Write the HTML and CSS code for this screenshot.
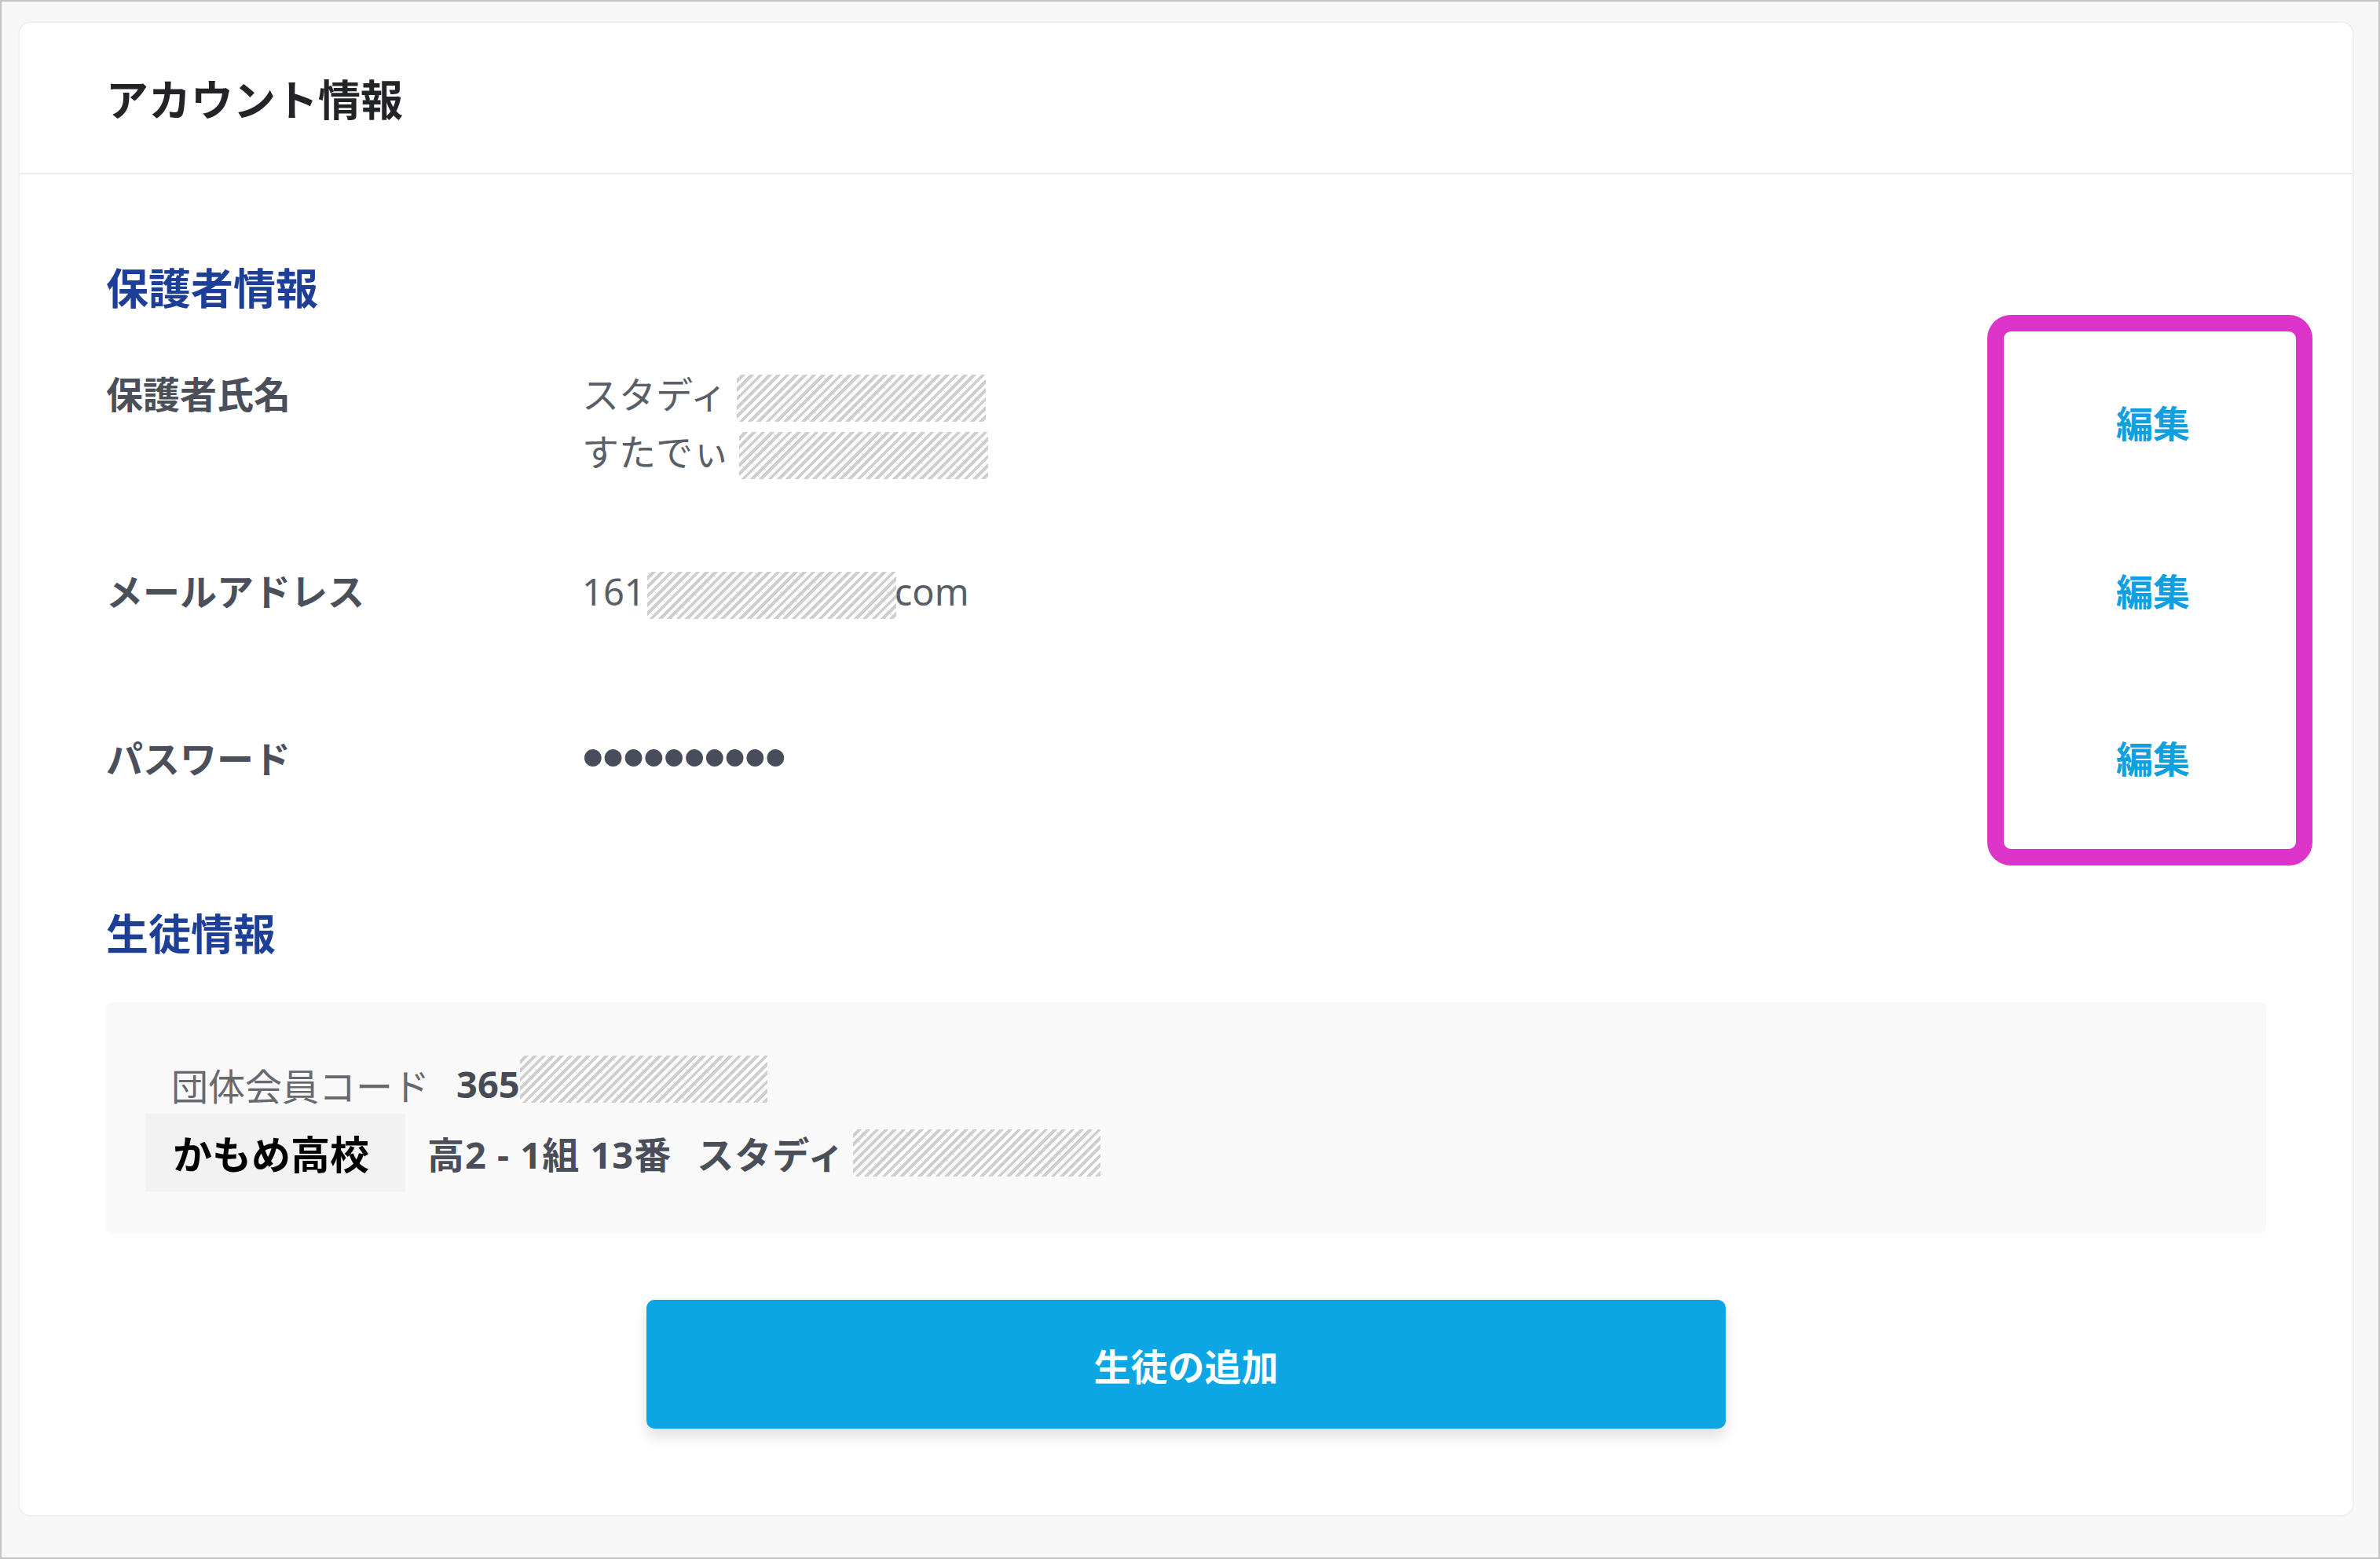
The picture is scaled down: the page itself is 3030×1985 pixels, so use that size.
FILE: index.html
```html
<!DOCTYPE html>
<html lang="ja">
<head>
<meta charset="utf-8">
<title>アカウント情報</title>
<link rel="stylesheet" href="styles.css">
</head>
<body>
<div class="frame">
  <div class="card">
    <div class="card-header">
      <h1 class="card-title">アカウント情報</h1>
    </div>
    <div class="card-body">
      <h2 class="section-title">保護者情報</h2>

      <div class="row row-name">
        <div class="row-label">保護者氏名</div>
        <div class="row-value">
          <div class="value-line">スタディ <span class="mask"></span></div>
          <div class="value-line">すたでぃ <span class="mask"></span></div>
        </div>
        <a class="row-action" href="#">編集</a>
      </div>

      <div class="row row-mail">
        <div class="row-label">メールアドレス</div>
        <div class="row-value">
          <div class="value-line">161<span class="mask mask-tight"></span>com</div>
        </div>
        <a class="row-action" href="#">編集</a>
      </div>

      <div class="row row-pass">
        <div class="row-label">パスワード</div>
        <div class="row-value">
          <div class="value-line password">••••••••••</div>
        </div>
        <a class="row-action" href="#">編集</a>
      </div>

      <h2 class="section-title section-student">生徒情報</h2>

      <div class="student-box">
        <div class="code-line"><span class="code-label">団体会員コード</span><strong class="code-num">365</strong><span class="mask mask-code"></span></div>
        <div class="student-line">
          <span class="school">かもめ高校</span>
          <span class="student-info">高2 - 1組 13番<span class="gap"></span>スタディ</span><span class="mask mask-student"></span>
        </div>
      </div>

      <div class="button-wrap">
        <button class="add-button" type="button">生徒の追加</button>
      </div>
    </div>

    <div class="annotation"></div>
  </div>
</div>
</body>
</html>
```

FILE: styles.css
```css
html, body {
  margin: 0;
  padding: 0;
}

body {
  font-family: "Noto Sans", "Noto Sans CJK JP", sans-serif;
  background: #f7f7f7;
}

.frame {
  box-sizing: border-box;
  height: 1985px;
  width: 3030px;
  border: 2px solid #c3c3c3;
  background: #f7f7f7;
  padding: 27px 33px 0 23px;
}

.card {
  position: relative;
  background: #ffffff;
  border-radius: 14px;
  box-shadow: 0 0 0 2px #efefef;
}

.card-header {
  box-sizing: border-box;
  height: 193px;
  border-bottom: 2px solid #e9eef1;
  padding: 4px 110px 0 110px;
  display: flex;
  align-items: center;
}

.card-title {
  margin: 0;
  font-size: 54px;
  line-height: 76px;
  font-weight: 700;
  color: #222428;
}

.card-body {
  padding: 0 110px 110px 110px;
}

.section-title {
  margin: 107px 0 0 0;
  font-size: 54px;
  line-height: 76px;
  font-weight: 700;
  color: #1d3f97;
}

.section-student {
  margin-top: 148px;
}

.row {
  display: grid;
  grid-template-columns: 606px 1fr 288px;
  align-items: start;
  font-size: 47px;
  line-height: 73px;
}

.row-name { margin-top: 61px; }
.row-mail { margin-top: 105px; }
.row-pass { margin-top: 140px; }

.row-label {
  font-weight: 700;
  color: #4a4f5a;
}

.row-value {
  color: #5a5e66;
}

.value-line {
  height: 73px;
  white-space: nowrap;
}

.row-action {
  align-self: center;
  text-align: center;
  font-weight: 700;
  color: #10a0e0;
  text-decoration: none;
}

.mask {
  display: inline-block;
  width: 317px;
  height: 60px;
  vertical-align: middle;
  background: repeating-linear-gradient(135deg, #ffffff 0, #ffffff 4px, #cfcfcf 4px, #cfcfcf 8px);
}

.mask-tight {
  margin: 0 -2px 0 2px;
}

.password {
  font-family: "DejaVu Sans", sans-serif;
  font-size: 62px;
  letter-spacing: -13.8px;
  margin-left: -6px;
  color: #474d5a;
  font-weight: 700;
}

.student-box {
  margin-top: 49px;
  background: #f9f9f9;
  border-radius: 8px;
  padding: 71px 50px 54px 50px;
}

.code-line {
  height: 66px;
  display: flex;
  align-items: center;
  padding-left: 33px;
  font-size: 47px;
  white-space: nowrap;
}

.code-label {
  color: #67696e;
}

.code-num {
  font-weight: 700;
  color: #474b55;
  margin-left: 34px;
}

.mask-code {
  width: 315px;
  margin-top: -12px;
}

.student-line {
  margin-top: 5px;
  display: flex;
  align-items: center;
  white-space: nowrap;
}

.school {
  box-sizing: border-box;
  height: 99px;
  display: inline-flex;
  align-items: center;
  padding: 0 46px 0 35px;
  background: #f2f2f2;
  font-size: 50px;
  font-weight: 700;
  color: #000000;
}

.student-info {
  margin-left: 28px;
  font-size: 47px;
  font-weight: 700;
  letter-spacing: 1px;
  color: #4a4e59;
}

.gap {
  display: inline-block;
  width: 32px;
}

.mask-student {
  width: 315px;
  margin-left: 10px;
}

.button-wrap {
  margin-top: 84px;
  display: flex;
  justify-content: center;
}

.add-button {
  width: 1374px;
  height: 164px;
  border: none;
  border-radius: 10px;
  background: #0ca6e5;
  color: #ffffff;
  font-family: "Noto Sans", "Noto Sans CJK JP", sans-serif;
  font-size: 47px;
  font-weight: 700;
  box-shadow: 0 10px 18px rgba(0, 0, 0, 0.13);
  cursor: pointer;
}

.annotation {
  position: absolute;
  left: 2505px;
  top: 372px;
  width: 414px;
  height: 701px;
  box-sizing: border-box;
  border: 21px solid #dc33c8;
  border-radius: 30px;
  pointer-events: none;
}
```
